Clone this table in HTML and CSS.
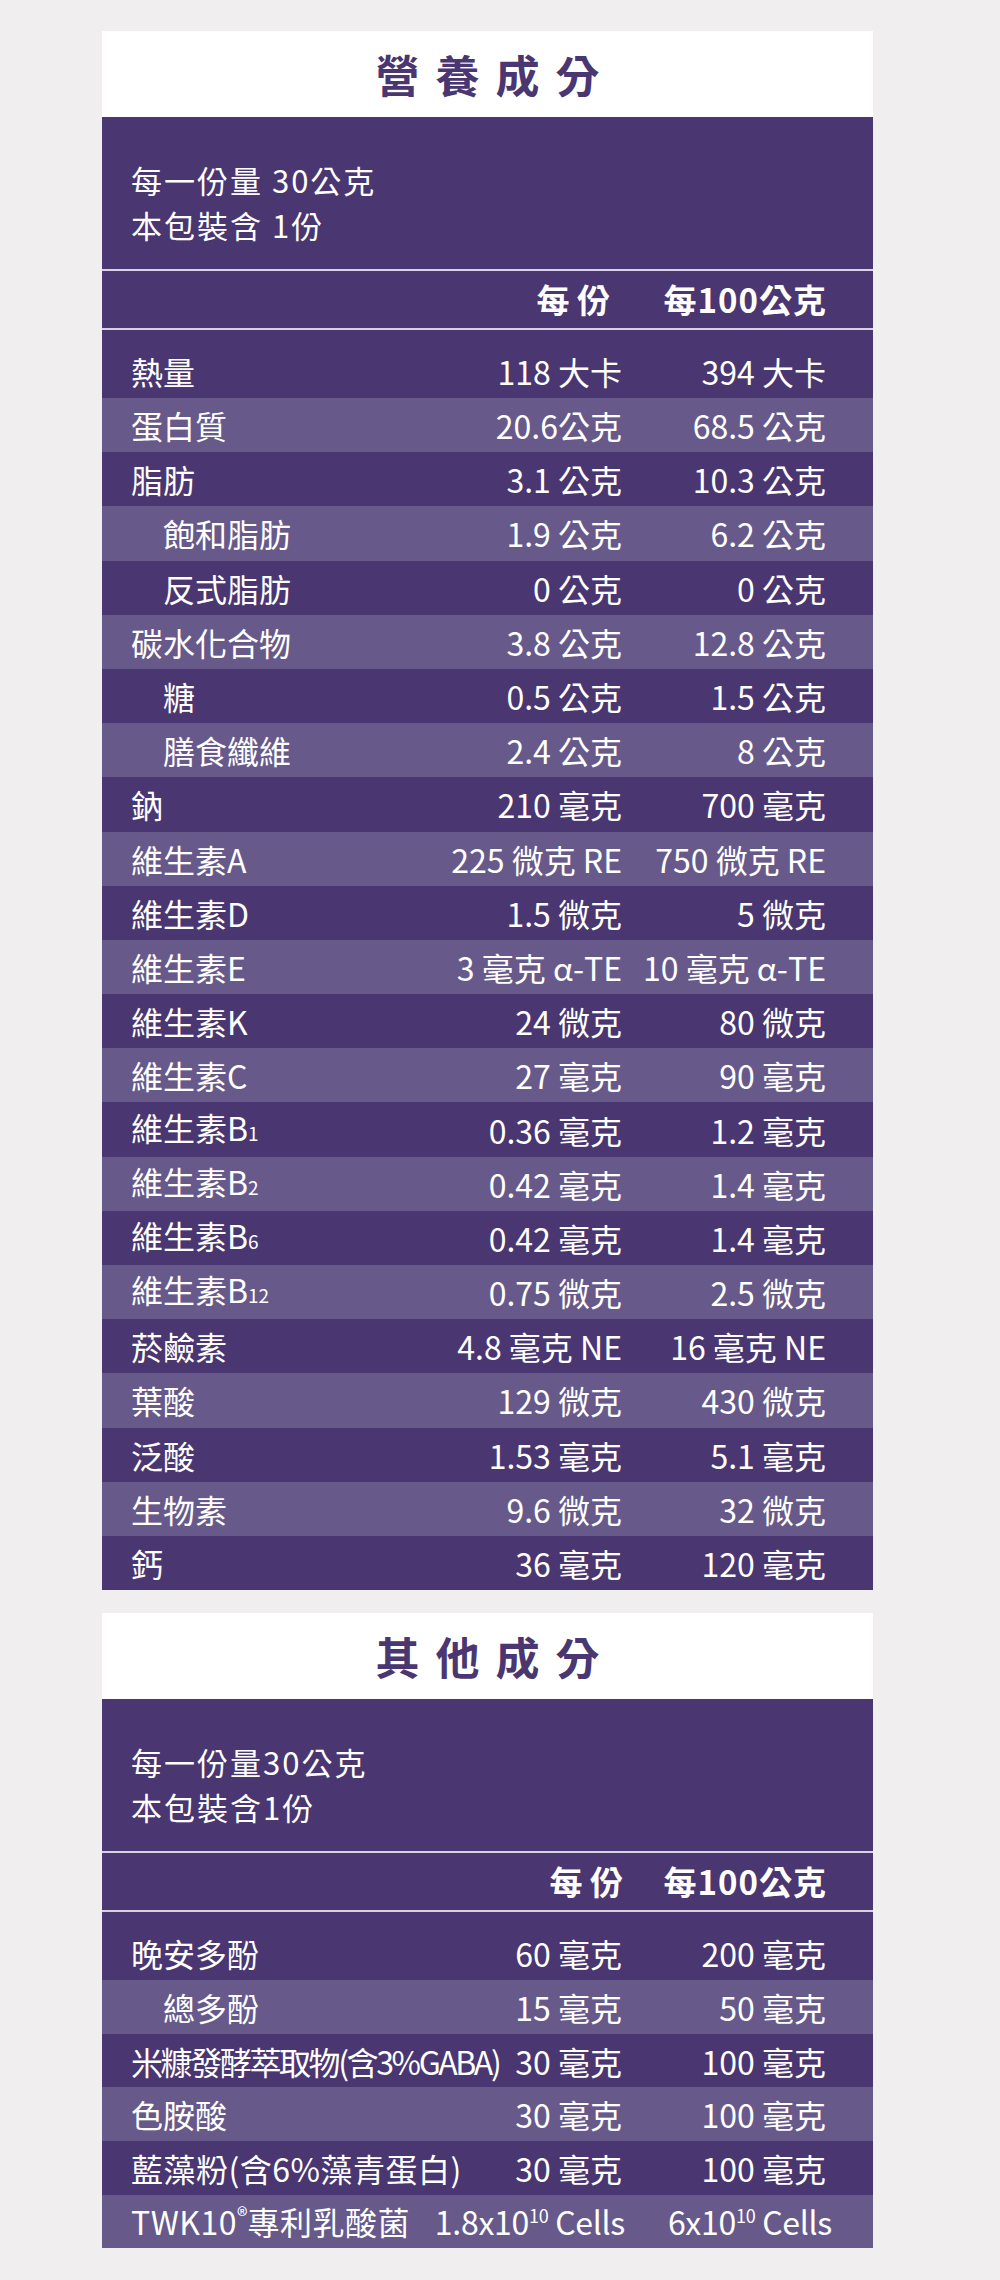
FILE: index.html
```html
<!DOCTYPE html>
<html lang="zh-Hant">
<head>
<meta charset="utf-8">
<title>營養成分</title>
<link rel="stylesheet" href="styles.css">
</head>
<body>
<main class="page">
  <section class="panel panel--nutrition">
    <h2 class="panel__title">營養成分</h2>
    <div class="panel__desc">
      <p>每一份量 30公克</p>
      <p>本包裝含 1份</p>
    </div>
    <div class="head">
      <span class="c0"></span>
      <span class="c1 c1--pad">每 份</span>
      <span class="c2">每100公克</span>
    </div>
    <div class="rows">
      <div class="row"><span class="c0">熱量</span><span class="c1">118 大卡</span><span class="c2">394 大卡</span></div>
      <div class="row"><span class="c0">蛋白質</span><span class="c1">20.6公克</span><span class="c2">68.5 公克</span></div>
      <div class="row"><span class="c0">脂肪</span><span class="c1">3.1 公克</span><span class="c2">10.3 公克</span></div>
      <div class="row"><span class="c0 c0--sub">飽和脂肪</span><span class="c1">1.9 公克</span><span class="c2">6.2 公克</span></div>
      <div class="row"><span class="c0 c0--sub">反式脂肪</span><span class="c1">0 公克</span><span class="c2">0 公克</span></div>
      <div class="row"><span class="c0">碳水化合物</span><span class="c1">3.8 公克</span><span class="c2">12.8 公克</span></div>
      <div class="row"><span class="c0 c0--sub">糖</span><span class="c1">0.5 公克</span><span class="c2">1.5 公克</span></div>
      <div class="row"><span class="c0 c0--sub">膳食纖維</span><span class="c1">2.4 公克</span><span class="c2">8 公克</span></div>
      <div class="row"><span class="c0">鈉</span><span class="c1">210 毫克</span><span class="c2">700 毫克</span></div>
      <div class="row"><span class="c0">維生素A</span><span class="c1">225 微克 RE</span><span class="c2">750 微克 RE</span></div>
      <div class="row"><span class="c0">維生素D</span><span class="c1">1.5 微克</span><span class="c2">5 微克</span></div>
      <div class="row"><span class="c0">維生素E</span><span class="c1">3 毫克 α-TE</span><span class="c2">10 毫克 α-TE</span></div>
      <div class="row"><span class="c0">維生素K</span><span class="c1">24 微克</span><span class="c2">80 微克</span></div>
      <div class="row"><span class="c0">維生素C</span><span class="c1">27 毫克</span><span class="c2">90 毫克</span></div>
      <div class="row"><span class="c0">維生素B<small class="idx">1</small></span><span class="c1">0.36 毫克</span><span class="c2">1.2 毫克</span></div>
      <div class="row"><span class="c0">維生素B<small class="idx">2</small></span><span class="c1">0.42 毫克</span><span class="c2">1.4 毫克</span></div>
      <div class="row"><span class="c0">維生素B<small class="idx">6</small></span><span class="c1">0.42 毫克</span><span class="c2">1.4 毫克</span></div>
      <div class="row"><span class="c0">維生素B<small class="idx">12</small></span><span class="c1">0.75 微克</span><span class="c2">2.5 微克</span></div>
      <div class="row"><span class="c0">菸鹼素</span><span class="c1">4.8 毫克 NE</span><span class="c2">16 毫克 NE</span></div>
      <div class="row"><span class="c0">葉酸</span><span class="c1">129 微克</span><span class="c2">430 微克</span></div>
      <div class="row"><span class="c0">泛酸</span><span class="c1">1.53 毫克</span><span class="c2">5.1 毫克</span></div>
      <div class="row"><span class="c0">生物素</span><span class="c1">9.6 微克</span><span class="c2">32 微克</span></div>
      <div class="row"><span class="c0">鈣</span><span class="c1">36 毫克</span><span class="c2">120 毫克</span></div>
    </div>
  </section>

  <section class="panel panel--other">
    <h2 class="panel__title">其他成分</h2>
    <div class="panel__desc">
      <p>每一份量30公克</p>
      <p>本包裝含1份</p>
    </div>
    <div class="head">
      <span class="c0"></span>
      <span class="c1">每 份</span>
      <span class="c2">每100公克</span>
    </div>
    <div class="rows">
      <div class="row"><span class="c0">晚安多酚</span><span class="c1">60 毫克</span><span class="c2">200 毫克</span></div>
      <div class="row"><span class="c0 c0--sub">總多酚</span><span class="c1">15 毫克</span><span class="c2">50 毫克</span></div>
      <div class="row"><span class="c0 c0--tight">米糠發酵萃取物(含3%GABA)</span><span class="c1">30 毫克</span><span class="c2">100 毫克</span></div>
      <div class="row"><span class="c0">色胺酸</span><span class="c1">30 毫克</span><span class="c2">100 毫克</span></div>
      <div class="row"><span class="c0 c0--loose">藍藻粉(含6%藻青蛋白)</span><span class="c1">30 毫克</span><span class="c2">100 毫克</span></div>
      <div class="row row--wide"><span class="c0 c0--loose">TWK10<sup class="reg">®</sup>專利乳酸菌</span><span class="c1">1.8x10<sup class="exp">10</sup> Cells</span><span class="c2">6x10<sup class="exp">10</sup> Cells</span></div>
    </div>
  </section>
</main>
</body>
</html>
```

FILE: styles.css
```css
* { box-sizing: border-box; }

html, body {
  margin: 0;
  padding: 0;
}

body {
  background: #f0eeef;
  font-family: "Noto Sans CJK TC", "Noto Sans CJK SC", "Noto Sans", sans-serif;
  color: #ffffff;
}

.page {
  display: flex;
  flex-direction: column;
  gap: 23px;
  padding: 31px 0 32px 102px;
}

.panel {
  width: 771px;
  background: #4a3670;
}

.panel__title {
  margin: 0;
  height: 86px;
  background: #ffffff;
  color: #4a3670;
  font-size: 44px;
  font-weight: 700;
  letter-spacing: 16px;
  text-indent: 16px;
  line-height: 86px;
  text-align: center;
}

.panel__desc {
  height: 152px;
  padding: 40px 0 22px 29px;
  font-size: 31px;
  line-height: 45px;
  letter-spacing: 2px;
}

.panel__desc p {
  margin: 0;
}

.head {
  display: flex;
  height: 59px;
  padding: 0 47px 0 29px;
  border-top: 2px solid #d9d2e5;
  font-size: 33px;
  font-weight: 700;
  line-height: 57px;
  white-space: nowrap;
}

.head .c2 {
  letter-spacing: 1px;
  margin-right: -1px;
}

.rows {
  border-top: 2px solid #d9d2e5;
}

.row {
  display: flex;
  align-items: center;
  height: 54.2px;
  padding: 0 47px 0 29px;
  font-size: 32px;
  line-height: 40px;
  white-space: nowrap;
  background: #4a3670;
}

.panel--other .row {
  height: 53.6px;
}

.row:nth-child(even) {
  background: #675a8b;
}

.row:first-child {
  height: 68px;
  padding-top: 14px;
}

.c0 {
  flex: 1 1 auto;
  letter-spacing: 0;
}

.c0--sub {
  padding-left: 32px;
}

.c0--tight {
  letter-spacing: -2.4px;
}

.c0--loose {
  letter-spacing: 0.5px;
}

.c1 {
  flex: 0 0 auto;
  text-align: right;
}

.c1--pad {
  padding-right: 13px;
}

.c2 {
  flex: 0 0 204px;
  text-align: right;
}

.idx {
  font-size: 19px;
  letter-spacing: 0;
}

.reg {
  font-size: 22px;
  vertical-align: 11px;
  line-height: 0;
  letter-spacing: 0;
}

.exp {
  font-size: 18px;
  vertical-align: 12px;
  line-height: 0;
}

.row--wide .c1 {
  margin-right: 3px;
  letter-spacing: -0.3px;
}

.row--wide .c2 {
  margin-right: -6px;
  letter-spacing: -0.3px;
}
```
